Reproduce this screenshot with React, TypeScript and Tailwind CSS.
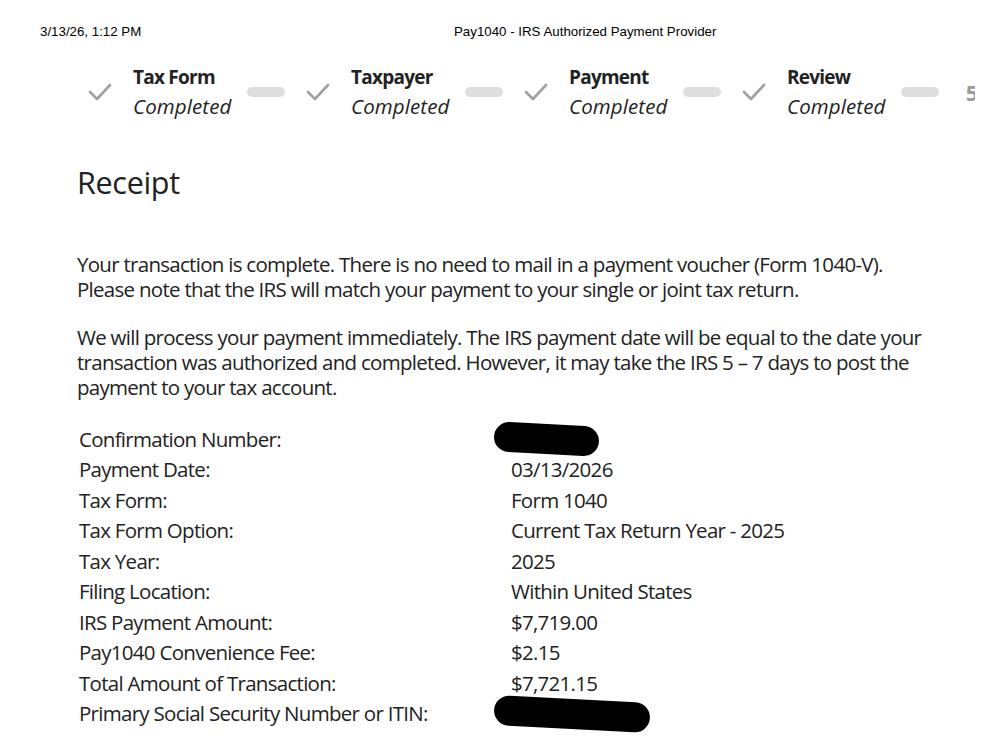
import React from 'react';

// Receipt page, printed from the browser (print header on top)

const steps = ['Tax Form', 'Taxpayer', 'Payment', 'Review'];

const rows: { label: string; value?: string; redact?: string }[] = [
    { label: 'Confirmation Number:', redact: 'w-[105px]' },
    { label: 'Payment Date:', value: '03/13/2026' },
    { label: 'Tax Form:', value: 'Form 1040' },
    { label: 'Tax Form Option:', value: 'Current Tax Return Year - 2025' },
    { label: 'Tax Year:', value: '2025' },
    { label: 'Filing Location:', value: 'Within United States' },
    { label: 'IRS Payment Amount:', value: '$7,719.00' },
    { label: 'Pay1040 Convenience Fee:', value: '$2.15' },
    { label: 'Total Amount of Transaction:', value: '$7,721.15' },
    { label: 'Primary Social Security Number or ITIN:', redact: 'w-[156px]' },
    { label: 'Taxpayer Name:', value: '' },
];

const Check: React.FC = () => (
    <svg width="24" height="20" viewBox="0 0 24 20" className="shrink-0">
        <polyline points="2,10 9,17 22,3" fill="none" stroke="#a0a0a0" strokeWidth="2.6" strokeLinecap="round" strokeLinejoin="round" />
    </svg>
);

const App: React.FC = () => {
    return (
        <div className="h-[737px] w-[1008px] overflow-hidden bg-white text-[#222]">
            {/* Print header */}
            <div className="flex h-[42px] items-end pl-[40px] font-['Liberation_Sans',Arial,sans-serif] text-[13.3px] text-black">
                <span className="w-[414px]">3/13/26, 1:12 PM</span>
                <span>Pay1040 - IRS Authorized Payment Provider</span>
            </div>

            <div className="font-['Open_Sans',sans-serif]">
                {/* Progress steps */}
                <div className="mt-[21px] ml-[88px] flex w-[887px] overflow-hidden">
                    {steps.map((step) => (
                        <div key={step} className="flex w-[218px] shrink-0 items-center">
                            <Check />
                            <div className="ml-[21px] w-[114px] leading-[29px]">
                                <div className="text-[19px] font-bold tracking-[-0.04em]">{step}</div>
                                <div className="text-[20.5px] italic tracking-[0.005em]">Completed</div>
                            </div>
                            <div className="h-[10px] w-[38px] rounded-full bg-[#dedede]" />
                        </div>
                    ))}
                    <div className="flex w-[24px] shrink-0 items-center justify-center text-[22px] font-bold text-[#9b9b9b]">5</div>
                </div>

                <div className="pl-[77px]">
                    <h1 className="mt-[41px] text-[30.5px] leading-[40px] tracking-[-0.01em]">Receipt</h1>

                    <div className="mt-[50px] w-[860px] text-[20.5px] leading-[25px] tracking-[-0.035em]">
                        <p>
                            Your transaction is complete. There is no need to mail in a payment voucher (Form 1040-V).
                            <br />
                            Please note that the IRS will match your payment to your single or joint tax return.
                        </p>
                        <p className="mt-[23px]">
                            We will process your payment immediately. The IRS payment date will be equal to the date your transaction was authorized and completed. However, it may take the IRS 5 – 7 days to post the payment to your tax account.
                        </p>
                    </div>

                    <div className="mt-[24px] pl-[2px] text-[20.5px] tracking-[-0.035em]">
                        {rows.map((row) => (
                            <div key={row.label} className="flex h-[30.5px] items-center">
                                <div className="w-[432px] shrink-0">{row.label}</div>
                                {row.redact ? (
                                    <div className={`${row.redact} -ml-[17px] h-[30px] rotate-[3deg] rounded-full bg-black`} />
                                ) : (
                                    <div>{row.value}</div>
                                )}
                            </div>
                        ))}
                    </div>
                </div>
            </div>
        </div>
    );
};

export default App;
